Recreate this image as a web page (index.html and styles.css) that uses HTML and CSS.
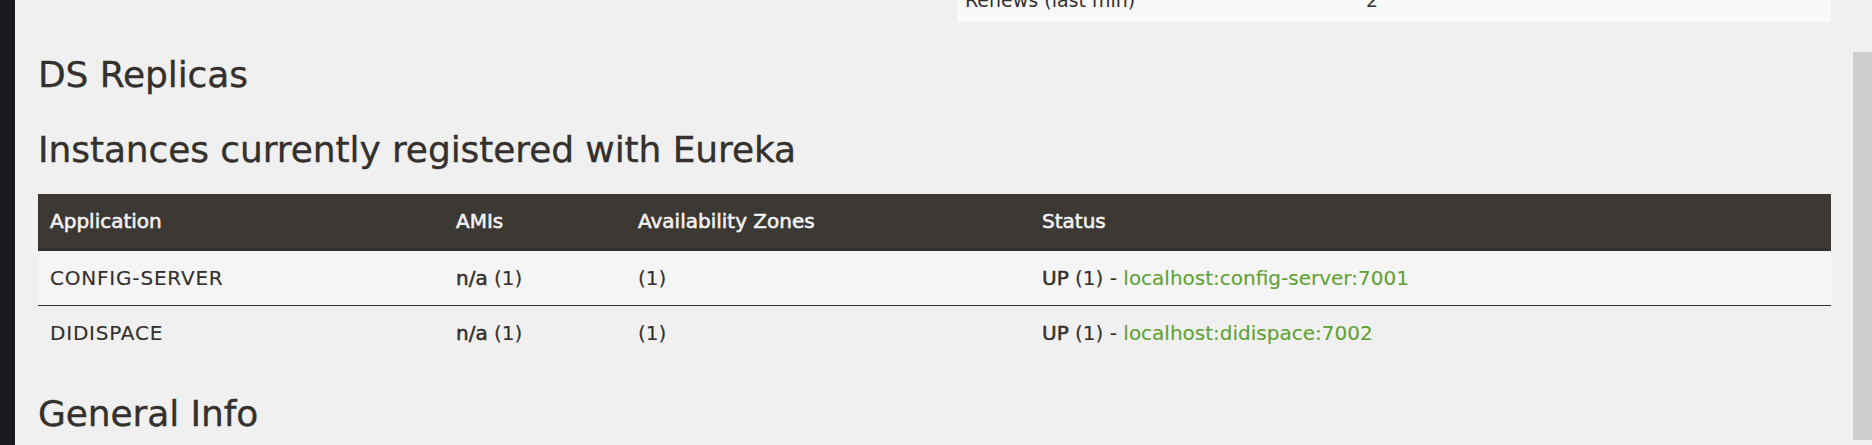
FILE: index.html
```html
<!DOCTYPE html>
<html lang="en">
<head>
<meta charset="utf-8">
<title>Eureka</title>
<link rel="stylesheet" href="styles.css">
</head>
<body>
<div class="app">
  <aside class="side"></aside>
  <main class="main">
    <div class="stats">
      <div class="stats-left"></div>
      <table class="stats-table">
        <tbody>
          <tr><td class="stats-key">Renews (last min)</td><td class="stats-val">2</td></tr>
        </tbody>
      </table>
    </div>
    <h1 class="title title-first">DS Replicas</h1>
    <h2 class="title title-next">Instances currently registered with Eureka</h2>
    <table class="instances">
      <thead>
        <tr>
          <th class="c-app">Application</th>
          <th class="c-ami">AMIs</th>
          <th class="c-zone">Availability Zones</th>
          <th class="c-status">Status</th>
        </tr>
      </thead>
      <tbody>
        <tr class="row-odd">
          <td class="app-name">CONFIG-SERVER</td>
          <td><b class="strong">n/a</b> (1)</td>
          <td>(1)</td>
          <td><b class="strong">UP</b> (1) - <a class="inst-link" href="#">localhost:config-server:7001</a></td>
        </tr>
        <tr class="row-even">
          <td class="app-name">DIDISPACE</td>
          <td><b class="strong">n/a</b> (1)</td>
          <td>(1)</td>
          <td><b class="strong">UP</b> (1) - <a class="inst-link" href="#">localhost:didispace:7002</a></td>
        </tr>
      </tbody>
    </table>
    <h2 class="title title-last">General Info</h2>
  </main>
  <div class="scroll"><div class="thumb"></div></div>
</div>
</body>
</html>
```

FILE: styles.css
```css
html, body {
  margin: 0;
  padding: 0;
  height: 445px;
  overflow: hidden;
  background: #f0f0f0;
}

.app {
  display: flex;
  height: 445px;
  overflow: hidden;
  font-family: "DejaVu Sans", "Liberation Sans", sans-serif;
  color: #34302d;
}

.side {
  width: 15px;
  flex: 0 0 15px;
  background: #17191c;
}

.main {
  flex: 1 1 auto;
  min-width: 0;
  padding: 0 22px 0 23px;
  display: flex;
  flex-direction: column;
}

.scroll {
  width: 19px;
  flex: 0 0 19px;
}

.thumb {
  margin-top: 52px;
  height: 388px;
  background: #cdcdcd;
}

/* top stats table (scrolled partially out of view) */
.stats {
  display: grid;
  grid-template-columns: 1fr 874px;
  margin-top: -22px;
}

.stats-table {
  border-collapse: separate;
  border-spacing: 0;
  width: 874px;
  background: #f9f9f9;
  font-size: 19px;
  line-height: 22px;
  color: #34302d;
}

.stats-table td {
  padding: 11px 8px;
  vertical-align: middle;
}

.stats-key {
  width: 385px;
}

/* headings */
.title {
  margin: 0;
  font-family: "DejaVu Sans", "Liberation Sans", sans-serif;
  font-weight: normal;
  font-size: 36px;
  line-height: 40px;
  color: #34302d;
  letter-spacing: -0.1px;
  -webkit-text-stroke: 0.35px #34302d;
}

.title-first { margin-top: 33px; }
.title-next { margin-top: 35px; }
.title-last { margin-top: 34px; }

/* instances table */
.instances {
  margin-top: 24px;
  width: 100%;
  table-layout: fixed;
  border-collapse: separate;
  border-spacing: 0;
  font-size: 20px;
  line-height: 22px;
}

.instances th {
  box-sizing: border-box;
  text-align: left;
  font-weight: normal;
  -webkit-text-stroke: 0.6px #f1f1f1;
  background: #3c3834;
  color: #f1f1f1;
  padding: 16px 12px;
  border-bottom: 3px solid #34302d;
  white-space: nowrap;
}

.c-app { width: 406px; }
.c-ami { width: 182px; }
.c-zone { width: 404px; }

.instances td {
  padding: 16px 12px;
  vertical-align: middle;
  white-space: nowrap;
  color: #34302d;
  -webkit-text-stroke: 0.15px #34302d;
}

.instances td.app-name {
  letter-spacing: 0.8px;
}

.row-odd td {
  background: #f5f5f5;
  border-bottom: 1px solid #34302d;
}

.row-even td {
  background: #f0f0f0;
}

.strong {
  font-weight: normal;
  -webkit-text-stroke: 0.55px #34302d;
}

.inst-link {
  color: #5fa134;
  text-decoration: none;
  -webkit-text-stroke: 0.1px #5fa134;
}
```
